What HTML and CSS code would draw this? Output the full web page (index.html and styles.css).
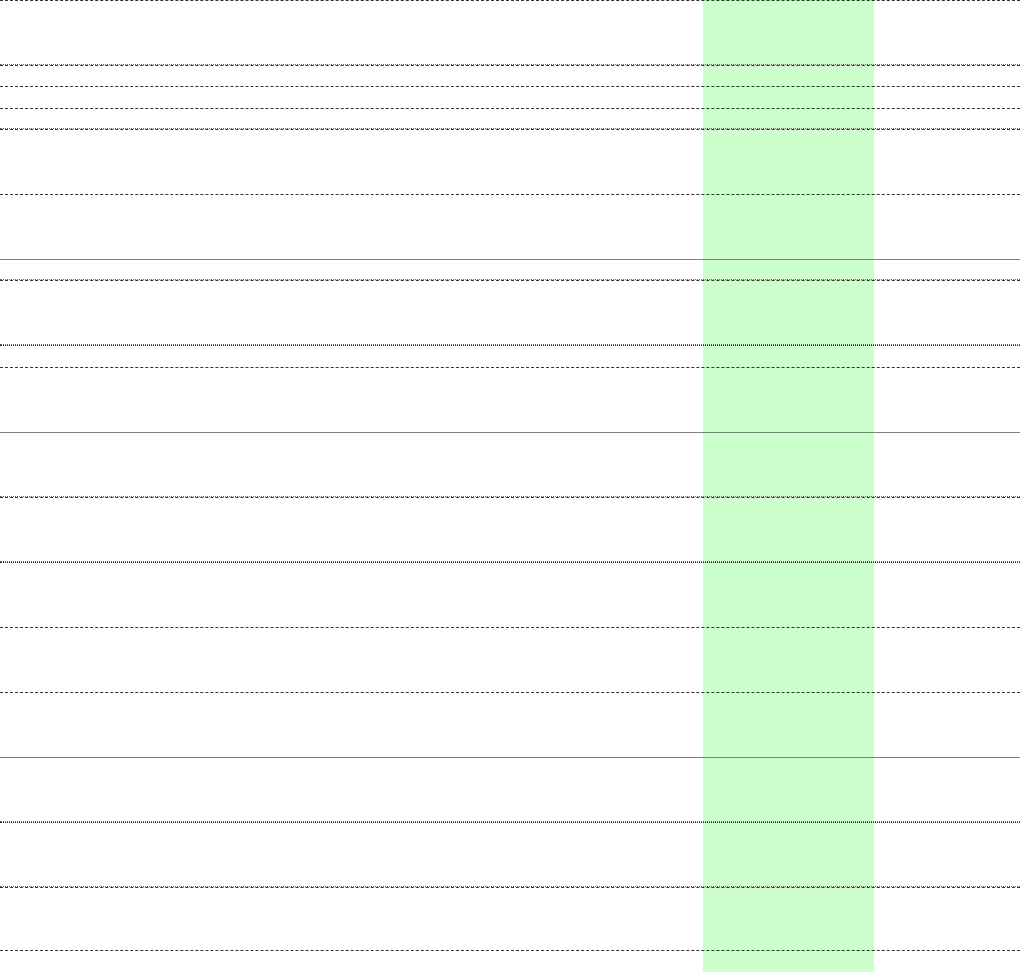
FILE: index.html
```html
<!DOCTYPE html>
<html>
<head>
<meta charset="utf-8">
<title>Rows</title>
<link rel="stylesheet" href="styles.css">
</head>
<body>
<div class="sheet">
  <div class="row tall dash1 pre"></div>
  <div class="row short dash1"></div>
  <div class="row mid dash1"></div>
  <div class="row short dash1 pre"></div>
  <div class="row tall dash1"></div>
  <div class="row tall dash1"></div>
  <div class="row short solid pre"></div>
  <div class="row tall dash1 pre"></div>
  <div class="row mid dot1"></div>
  <div class="row tall dash1"></div>
  <div class="row tall solid pre"></div>
  <div class="row tall dash1 pre"></div>
  <div class="row tall dot1"></div>
  <div class="row tall dash1"></div>
  <div class="row tall dash1"></div>
  <div class="row tall solid pre"></div>
  <div class="row tall dot1 pre"></div>
  <div class="row last dash1"></div>
  <div class="row end dash1"></div>
</div>
</body>
</html>
```
FILE: styles.css
```css
html, body {
  margin: 0;
  padding: 0;
  background: #ffffff;
  font-family: "Liberation Sans", Arial, sans-serif;
}
.sheet {
  width: 1021px;
  min-height: 972px;
  display: flex;
  flex-direction: column;
  background: linear-gradient(to right, transparent 703px, #ccffcc 703px, #ccffcc 874px, transparent 874px);
}
.row {
  box-sizing: border-box;
  width: 1020px;
  flex: none;
}
.tall { height: 65px; }
.short { height: 21px; }
.mid { height: 22px; }
.last { height: 63px; }
.end { height: 22px; }
.dash1 { border-top: 1px dashed #333; }
.dot1 { border-top: 1px dotted #222; }
.solid { border-top: 1px solid #808080; }
.pre { border-bottom: 1px dotted #666; }
```
